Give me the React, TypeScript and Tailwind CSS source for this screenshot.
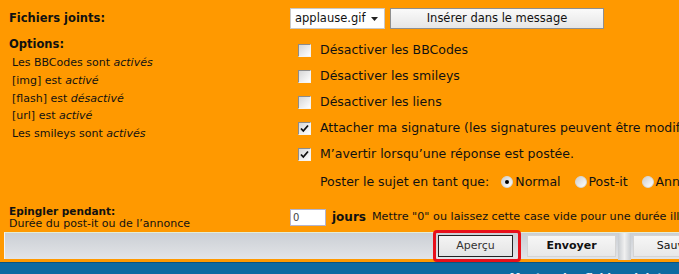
import React from 'react';

const Check: React.FC<{ on?: boolean }> = ({ on }) => (
  <span className="inline-flex h-[13px] w-[13px] shrink-0 items-center justify-center border border-t-[#8c8c8c] border-l-[#8c8c8c] border-b-[#f4f4f4] border-r-[#f4f4f4] bg-gradient-to-br from-[#d6d6d6] to-white">
    {on && (
      <svg width="9" height="9" viewBox="0 0 9 9">
        <path d="M1 4.5 L3.3 7 L8 1.5" fill="none" stroke="#111" strokeWidth="1.8" />
      </svg>
    )}
  </span>
);

const Radio: React.FC<{ on?: boolean }> = ({ on }) => (
  <span className="inline-flex h-[12px] w-[12px] shrink-0 items-center justify-center rounded-full border border-[#d8d8d8] bg-gradient-to-br from-[#cfcfcf] to-white">
    {on && <span className="h-[4px] w-[4px] rounded-full bg-black" />}
  </span>
);

const options = [
  { label: 'Désactiver les BBCodes', on: false },
  { label: 'Désactiver les smileys', on: false },
  { label: 'Désactiver les liens', on: false },
  { label: 'Attacher ma signature (les signatures peuvent être modifiées dans le profil)', on: true },
  { label: 'M’avertir lorsqu’une réponse est postée.', on: true },
];

export default function App() {
  return (
    <div className="relative h-[274px] w-[679px] overflow-hidden bg-[#ff9900] text-[#111] whitespace-nowrap font-['DejaVu_Sans',Verdana,sans-serif]">
      {/* Fichiers joints */}
      <div className="flex h-[37px] items-start pt-[8px]">
        <div className="w-[290px] shrink-0 pl-[9px] pt-[4px] text-[11.5px] font-bold leading-[13px]">Fichiers joints:</div>
        <div className="flex shrink-0 items-center gap-[5px]">
          <div className="flex h-[21px] w-[95px] items-center justify-between border border-[#c8c8c8] bg-white pl-[4px] pr-[6px] text-[11.5px]">
            <span>applause.gif</span>
            <svg width="7" height="4" viewBox="0 0 7 4"><path d="M0 0 H7 L3.5 4 Z" fill="#222" /></svg>
          </div>
          <div className="flex h-[21px] w-[214px] items-center justify-center border border-[#8f8f8f] bg-gradient-to-b from-[#fafafa] to-[#e6e6e6] text-[11.5px]">
            Insérer dans le message
          </div>
        </div>
      </div>

      {/* Options */}
      <div className="flex h-[163px]">
        <div className="w-[290px] shrink-0 pl-[9px]">
          <div className="text-[11.5px] font-bold leading-[14px]">Options:</div>
          <div className="mt-[3px] flex flex-col pl-[3px] text-[11px] leading-[17.8px]">
            <span>Les BBCodes sont <i>activés</i></span>
            <span>[img] est <i>activé</i></span>
            <span>[flash] est <i>désactivé</i></span>
            <span>[url] est <i>activé</i></span>
            <span>Les smileys sont <i>activés</i></span>
          </div>
        </div>
        <div className="flex shrink-0 flex-col">
          {options.map((o) => (
            <div key={o.label} className="flex h-[26px] items-center gap-[9px] pl-[8px] text-[12.5px]">
              <Check on={o.on} />
              <span>{o.label}</span>
            </div>
          ))}
          <div className="flex h-[27px] items-center pl-[30px] pt-[3px] text-[12.5px]">
            <span className="mr-[12px]">Poster le sujet en tant que:</span>
            <Radio on />
            <span className="ml-[2px] mr-[14px]">Normal</span>
            <Radio />
            <span className="ml-[2px] mr-[14px]">Post-it</span>
            <Radio />
            <span className="ml-[2px]">Annonce</span>
          </div>
        </div>
      </div>

      {/* Epingler */}
      <div className="flex h-[32px] items-start">
        <div className="w-[290px] shrink-0 pl-[9px] pt-[5px]">
          <div className="text-[10.5px] font-bold leading-[12px]">Epingler pendant:</div>
          <div className="text-[11px] leading-[13px]">Durée du post-it ou de l’annonce</div>
        </div>
        <div className="flex shrink-0 items-center pt-[8px]">
          <div className="flex h-[17px] w-[36px] items-center border border-[#b4b4cc] bg-white pl-[2px] text-[10px] text-[#444]">0</div>
          <span className="ml-[6px] text-[12px] font-bold">jours</span>
          <span className="ml-[6px] text-[11.2px]">Mettre "0" ou laissez cette case vide pour une durée illimitée</span>
        </div>
      </div>

      {/* Bottom bar */}
      <div className="ml-[4px] flex h-[27px] items-center border-l border-t border-l-[#f4f4f4] border-t-[#e4ecd4] bg-gradient-to-b from-[#cbcfd5] to-[#e2e4e7]">
        <div className="flex flex-1 items-center justify-end">
          <div className="relative mr-[14px] flex h-[22px] w-[75px] items-center justify-center border border-[#222] bg-gradient-to-b from-[#f4f4f4] to-[#e4e4e4] text-[11px] text-[#333]">
            Aperçu
            <span className="absolute -left-[6px] -top-[6px] h-[32px] w-[88px] rounded-[4px] border-[3px] border-[#e8101a]" />
          </div>
          <div className="flex h-[22px] w-[89px] items-center justify-center border border-[#d4d4d4] bg-gradient-to-b from-[#f6f6f6] to-[#e8e8e8] text-[11px] font-bold">
            Envoyer
          </div>
          <div className="mx-[2px] h-[27px] w-[13px] bg-gradient-to-r from-[#c8ccd0] via-[#f0f0f0] to-[#c8ccd0]" />
          <div className="-mr-[40px] flex h-[22px] w-[86px] items-center justify-center border border-[#d4d4d4] bg-gradient-to-b from-[#f6f6f6] to-[#e8e8e8] text-[11px]">
            Sauver
          </div>
        </div>
      </div>
      <div className="h-[3px] bg-[#ff9900]" />
      <div className="flex h-[20px] justify-end border-t border-t-[#0a5580] bg-[#0d6aa1] pr-[10px] pt-[7px] text-[11px] font-bold text-[#e8f0f8]">
        Montrer les fichiers joints
      </div>
    </div>
  );
}
